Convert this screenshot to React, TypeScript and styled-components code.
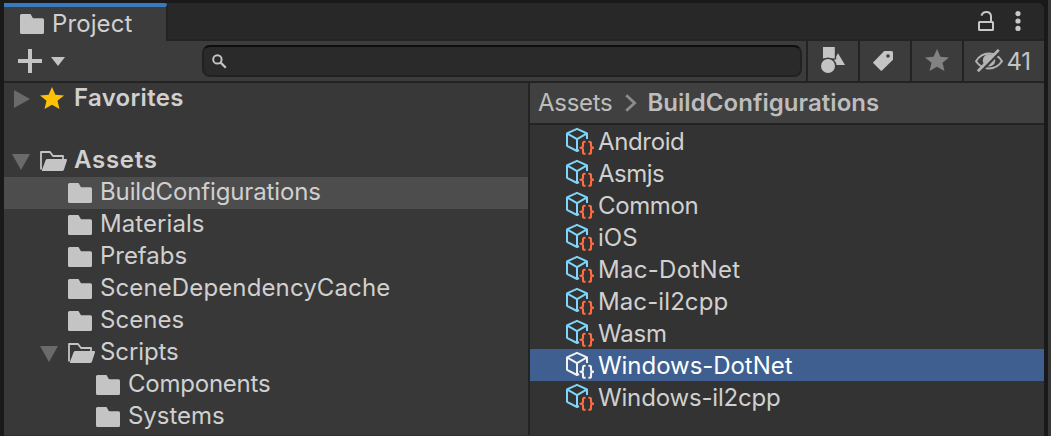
import React from "react";
import styled, { createGlobalStyle } from "styled-components";

const GlobalStyle = createGlobalStyle`
  * { box-sizing: border-box; }
  body {
    margin: 0;
    background: #191919;
    font-family: Inter, "Liberation Sans", sans-serif;
    font-size: 24px;
    color: #d0d0d0;
    overflow: hidden;
  }
  svg { display: block; flex: none; }
`;

const Screen = styled.div`
  display: flex;
  width: 1051px;
  height: 436px;
  padding: 3px 0 0 4px;
  background: #191919;
`;

const Panel = styled.section`
  display: flex;
  flex-direction: column;
  width: 1040px;
  height: 433px;
  border-bottom: 1px solid #312e30;
`;

const NextPanelEdge = styled.div`
  width: 3px;
  height: 436px;
  margin: -3px 0 0 4px;
  background: #383838;
`;

const TabBar = styled.header`
  display: flex;
  justify-content: space-between;
  flex: none;
  height: 38px;
  background: #282828;
  border-bottom: 2px solid #232323;
  border-radius: 0 6px 0 0;
`;

const Tab = styled.div`
  display: flex;
  align-items: center;
  width: 164px;
  height: 38px;
  padding: 0 0 0 16px;
  gap: 8px;
  background: #3c3c3c;
  border-top: 4px solid #3a79bb;
  border-right: 2px solid #222222;
  border-radius: 0 4px 0 0;
`;

const TabActions = styled.div`
  display: flex;
  align-items: center;
  gap: 21px;
  padding-right: 23px;
`;

const Toolbar = styled.div`
  display: flex;
  flex: none;
  height: 42px;
  background: #3c3c3c;
  border-bottom: 2px solid #232323;
`;

const AddButton = styled.button`
  display: flex;
  align-items: center;
  gap: 9px;
  width: 198px;
  padding: 0 0 0 14px;
  background: none;
  border: 0;
`;

const SearchField = styled.label`
  display: flex;
  align-items: center;
  width: 600px;
  height: 32px;
  margin: 4px 4px 0 0;
  padding-left: 8px;
  background: #2a2a2a;
  border: 2px solid #212121;
  border-top-color: #0d0d0d;
  border-radius: 8px;
`;

const ToolButton = styled.button<{ $width: number; $padding?: string }>`
  display: flex;
  align-items: center;
  justify-content: center;
  width: ${(p) => p.$width}px;
  padding: ${(p) => p.$padding ?? "0 0 2px"};
  gap: 4px;
  background: #3c3c3c;
  border: 0;
  border-left: 2px solid #232323;
  font: inherit;
  color: #c4c4c4;
`;

const Columns = styled.div`
  display: flex;
  flex: 1;
  min-height: 0;
`;

const Tree = styled.nav`
  flex: none;
  width: 526px;
  overflow: hidden;
  background: #383838;
  border-right: 2px solid #232323;
`;

const Content = styled.main`
  flex: 1;
  background: #333333;
`;

const Label = styled.span<{ $bold?: boolean; $spacing?: number }>`
  font-weight: ${(p) => (p.$bold ? 600 : 400)};
  letter-spacing: ${(p) => p.$spacing ?? 0}px;
  line-height: 30px;
  white-space: nowrap;
`;

const LoweredLabel = styled(Label)`
  padding-top: 2px;
`;

const TreeRow = styled.div<{ $depth: number; $selected?: boolean; $gapAfter?: boolean }>`
  display: flex;
  align-items: center;
  height: 32px;
  margin-bottom: ${(p) => (p.$gapAfter ? 30 : 0)}px;
  padding-left: ${(p) => 8 + p.$depth * 28}px;
  background: ${(p) => (p.$selected ? "#4d4d4d" : "transparent")};
`;

const ArrowSlot = styled.span`
  width: 28px;
`;

const IconSlot = styled.span<{ $raised?: boolean }>`
  width: 32px;
  padding-bottom: ${(p) => (p.$raised ? 2 : 0)}px;
`;

const TextSlot = styled.span<{ $inset: number }>`
  display: flex;
  padding-bottom: 2px;
  margin-left: ${(p) => p.$inset}px;
`;

const Breadcrumb = styled.div`
  display: flex;
  align-items: center;
  height: 42px;
  padding-left: 8px;
  color: #bdbdbd;
  background: #404040;
  border-bottom: 2px solid #232323;
`;

const Separator = styled.span`
  padding: 0 10px 0 13px;
`;

const AssetRow = styled.div<{ $selected?: boolean }>`
  display: flex;
  align-items: center;
  gap: 4px;
  height: 32px;
  padding-left: 36px;
  color: ${(p) => (p.$selected ? "#ffffff" : "#d0d0d0")};
  background: ${(p) => (p.$selected ? "#3e5f90" : "transparent")};
`;

const Folder = () => (
  <svg width="24" height="20" viewBox="0 0 24 20" fill="#c4c4c4">
    <path d="M1.5 0H10.5L13 4.2H22.5Q24 4.2 24 5.7V18.5Q24 20 22.5 20H1.5Q0 20 0 18.5V1.5Q0 0 1.5 0Z" />
  </svg>
);

const OpenFolder = () => (
  <svg width="28" height="20" viewBox="0 0 28 20">
    <path d="M1 18.5V1H10L13 5H23V8" fill="none" stroke="#c4c4c4" strokeWidth="1.8" strokeLinejoin="round" />
    <path d="M7.5 8H26Q27.4 8 27 9.3L24 18.5Q23.5 20 22 20H2.5Q1.5 20 2 18.7L5.6 9.3Q6.1 8 7.5 8Z" fill="#c4c4c4" />
  </svg>
);

const Star = ({ color }: { color: string }) => (
  <svg width="24" height="22" viewBox="0 0 24 22" fill={color}>
    <path d="M12 0L15.4 7.7L24 8.4L17.5 13.8L19.5 22L12 17.7L4.5 22L6.5 13.8L0 8.4L8.6 7.7Z" />
  </svg>
);

const Arrow = ({ open }: { open?: boolean }) => (
  <svg width="20" height="20" viewBox="0 0 20 20" fill="#6a6a6a">
    <path d={open ? "M0 3H18L9 19Z" : "M2 1V19L18 10Z"} />
  </svg>
);

const AssetCube = ({ selected }: { selected?: boolean }) => {
  const cube = selected ? "#f2f2f2" : "#7fd6fd";
  const brace = selected ? "#f2f2f2" : "#ff6e40";
  return (
    <svg width="28" height="28" viewBox="0 0 28 28" fill="none" strokeLinejoin="round">
      <path d="M21 12V6.4L11 1.8L1 6.4V18.8L11 24L13 23M1 6.4L11 12.2L21 6.4M11 12.2V24" stroke={cube} strokeWidth="2" />
      <path
        d="M19.6 14.8H18.6Q17 14.8 17 16.4V18.8Q17 20.8 14.4 20.8Q17 20.8 17 22.8V25.2Q17 26.8 18.6 26.8H19.6M22.4 14.8H23.4Q25 14.8 25 16.4V18.8Q25 20.8 27.6 20.8Q25 20.8 25 22.8V25.2Q25 26.8 23.4 26.8H22.4"
        stroke={brace}
        strokeWidth="2.1"
      />
    </svg>
  );
};

const LockOpen = () => (
  <svg width="16" height="20" viewBox="0 0 16 20" fill="none" stroke="#c8c8c8" strokeWidth="2">
    <rect x="1" y="11" width="14" height="8" rx="0.6" />
    <path d="M3.4 4.6Q4.6 1 8.4 1Q13 1 13 5.6V11" />
  </svg>
);

const Kebab = () => (
  <svg width="6" height="20" viewBox="0 0 6 20" fill="#c8c8c8">
    <circle cx="3" cy="2.6" r="2.6" />
    <circle cx="3" cy="10" r="2.6" />
    <circle cx="3" cy="17.4" r="2.6" />
  </svg>
);

const Plus = () => (
  <svg width="24" height="24" viewBox="0 0 24 24" fill="#c4c4c4">
    <path d="M10 0H14V10H24V14H14V24H10V14H0V10H10Z" />
  </svg>
);

const DropArrow = () => (
  <svg width="14" height="9" viewBox="0 0 14 9" fill="#c4c4c4">
    <path d="M0 0H14L7 9Z" />
  </svg>
);

const Magnifier = () => (
  <svg width="15" height="15" viewBox="0 0 15 15" fill="none" stroke="#c4c4c4" strokeWidth="2">
    <circle cx="5.4" cy="5.4" r="4.2" />
    <path d="M8.4 8.4L13.8 13.8" strokeWidth="2.3" />
  </svg>
);

const Shapes = () => (
  <svg width="24" height="26" viewBox="0 0 24 26" fill="#c4c4c4">
    <path d="M17 6.2L24 18H10.2Z" />
    <rect x="2" width="13.2" height="12.4" fill="#3c3c3c" />
    <rect x="2" width="11.8" height="11.4" />
    <circle cx="7" cy="19" r="8.6" fill="#3c3c3c" />
    <circle cx="7" cy="19" r="7" />
  </svg>
);

const TagIcon = () => (
  <svg width="20" height="20" viewBox="0 0 20 20" fill="#c4c4c4">
    <path fillRule="evenodd" d="M11.2 0H18.5Q20 0 20 1.5V8.8L9 19.5Q8.4 20.2 7.7 19.5L0.4 12.3Q-0.2 11.6 0.5 11ZM15 3.2A1.8 1.8 0 1 0 15 6.8A1.8 1.8 0 1 0 15 3.2Z" />
  </svg>
);

const HiddenEye = () => (
  <svg width="28" height="24" viewBox="0 0 28 24" fill="none">
    <path d="M1 12.2Q6 4.6 14 4.6Q22 4.6 27 12.2Q22 19.4 14 19.4Q6 19.4 1 12.2Z" stroke="#b4b4b4" strokeWidth="2" />
    <circle cx="14" cy="11.4" r="6.2" fill="#b4b4b4" />
    <path d="M5 23.6L26 2.1" stroke="#3c3c3c" strokeWidth="2.4" />
    <path d="M2.8 22.2L23.8 0.8" stroke="#b4b4b4" strokeWidth="2.7" />
  </svg>
);

const Chevron = () => (
  <svg width="12" height="18" viewBox="0 0 12 18" fill="none" stroke="#8c8c8c" strokeWidth="2.8">
    <path d="M1.2 1.2L9.6 9L1.2 16.8" />
  </svg>
);

type TreeItem = {
  name: string;
  depth: number;
  kind: "folder" | "open" | "favorites";
  spacing: number;
  bold?: boolean;
  selected?: boolean;
};

const tree: TreeItem[] = [
  { name: "Favorites", depth: 0, kind: "favorites", spacing: 0.3, bold: true },
  { name: "Assets", depth: 0, kind: "open", spacing: 0.73, bold: true },
  { name: "BuildConfigurations", depth: 1, kind: "folder", spacing: -0.13, selected: true },
  { name: "Materials", depth: 1, kind: "folder", spacing: 0.07 },
  { name: "Prefabs", depth: 1, kind: "folder", spacing: -0.03 },
  { name: "SceneDependencyCache", depth: 1, kind: "folder", spacing: 0.12 },
  { name: "Scenes", depth: 1, kind: "folder", spacing: 0.07 },
  { name: "Scripts", depth: 1, kind: "open", spacing: -0.1 },
  { name: "Components", depth: 2, kind: "folder", spacing: -0.23 },
  { name: "Systems", depth: 2, kind: "folder", spacing: -0.03 },
];

const assets = [
  { name: "Android", spacing: -0.36 },
  { name: "Asmjs", spacing: -0.5 },
  { name: "Common", spacing: -0.37 },
  { name: "iOS", spacing: 0.05 },
  { name: "Mac-DotNet", spacing: 0.3 },
  { name: "Mac-il2cpp", spacing: 0.1 },
  { name: "Wasm", spacing: -0.2 },
  { name: "Windows-DotNet", spacing: -0.05, selected: true },
  { name: "Windows-il2cpp", spacing: -0.17 },
];

export default function App() {
  return (
    <>
      <GlobalStyle />
      <Screen>
        <Panel>
          <TabBar>
            <Tab>
              <Folder />
              <Label $spacing={0.1}>Project</Label>
            </Tab>
            <TabActions>
              <LockOpen />
              <Kebab />
            </TabActions>
          </TabBar>
          <Toolbar>
            <AddButton aria-label="Create">
              <Plus />
              <DropArrow />
            </AddButton>
            <SearchField>
              <Magnifier />
            </SearchField>
            <ToolButton $width={52}><Shapes /></ToolButton>
            <ToolButton $width={52} $padding="0 4px 0 0"><TagIcon /></ToolButton>
            <ToolButton $width={52}><Star color="#828282" /></ToolButton>
            <ToolButton $width={82} $padding="0 3px 0 0">
              <HiddenEye />
              <LoweredLabel $spacing={-0.5}>41</LoweredLabel>
            </ToolButton>
          </Toolbar>
          <Columns>
            <Tree>
              {tree.map((item) => (
                <TreeRow key={item.name} $depth={item.depth} $selected={item.selected} $gapAfter={item.kind === "favorites"}>
                  <ArrowSlot>{item.kind !== "folder" && <Arrow open={item.kind === "open"} />}</ArrowSlot>
                  <IconSlot $raised={item.kind === "favorites"}>
                    {item.kind === "favorites" ? <Star color="#ffc107" /> : item.kind === "open" ? <OpenFolder /> : <Folder />}
                  </IconSlot>
                  <TextSlot $inset={item.bold ? 2 : 0}>
                    <Label $bold={item.bold} $spacing={item.spacing}>{item.name}</Label>
                  </TextSlot>
                </TreeRow>
              ))}
            </Tree>
            <Content>
              <Breadcrumb>
                <Label $spacing={-0.3}>Assets</Label>
                <Separator><Chevron /></Separator>
                <Label $bold $spacing={0.06}>BuildConfigurations</Label>
              </Breadcrumb>
              {assets.map((asset) => (
                <AssetRow key={asset.name} $selected={asset.selected}>
                  <AssetCube selected={asset.selected} />
                  <LoweredLabel $spacing={asset.spacing}>{asset.name}</LoweredLabel>
                </AssetRow>
              ))}
            </Content>
          </Columns>
        </Panel>
        <NextPanelEdge />
      </Screen>
    </>
  );
}
